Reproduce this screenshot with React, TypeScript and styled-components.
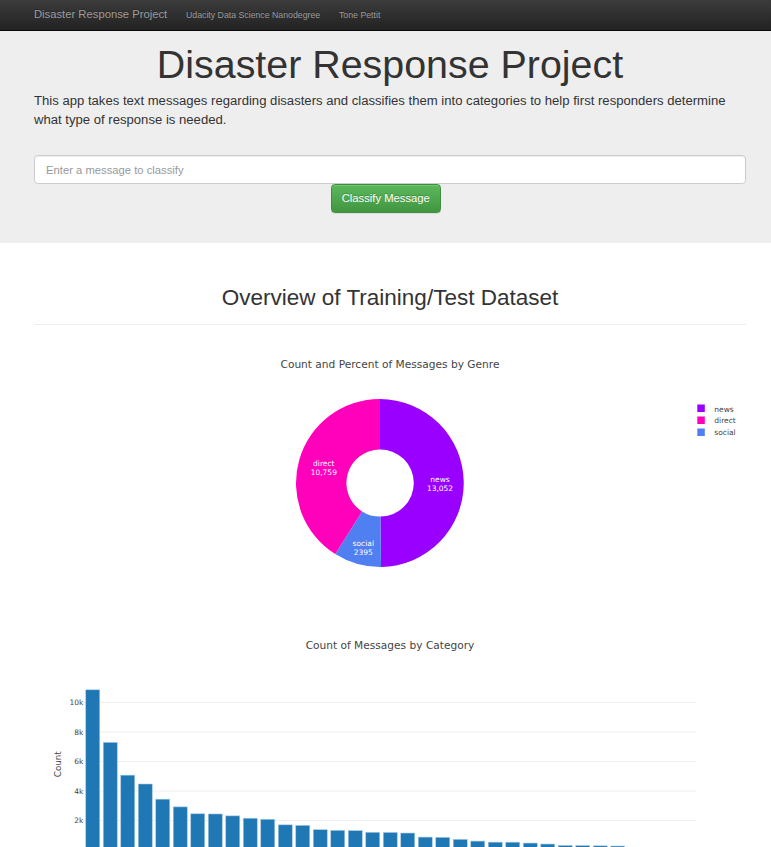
import React from "react";
import styled, { createGlobalStyle } from "styled-components";

const GlobalStyle = createGlobalStyle`
  html, body { margin: 0; padding: 0; background: #fff; }
  body {
    font-family: "Liberation Sans", Arial, Helvetica, sans-serif;
    font-size: 8.75px;
    line-height: 1.42857;
    color: #333;
  }
  * { box-sizing: border-box; }
`;

const Navbar = styled.nav`
  height: 31.25px;
  background: linear-gradient(to bottom, #3c3c3c 0%, #222 100%);
  border-bottom: 1px solid #080808;
`;

const NavInner = styled.div`
  width: 731px;
  margin-left: 24.6px;
  padding-top: 7.65px;
  display: flex;
  align-items: baseline;
`;

const Brand = styled.a`
  padding: 0 9.4px;
  font-size: 11.25px;
  line-height: 12.5px;
  color: #9d9d9d;
  text-decoration: none;
  text-shadow: 0 -1px 0 rgba(0, 0, 0, 0.25);
`;

const NavLink = styled.a`
  padding: 0 9.4px;
  font-size: 8.75px;
  line-height: 12.5px;
  color: #9d9d9d;
  text-decoration: none;
  text-shadow: 0 -1px 0 rgba(0, 0, 0, 0.25);
`;

const Jumbotron = styled.header`
  background: #eee;
  padding: 11.25px 0 30px;
`;

const Container = styled.div`
  width: 712px;
  margin-left: 34px;
`;

const HeroTitle = styled.h1`
  margin: 0 0 6.25px;
  font-size: 39.4px;
  line-height: 43.3px;
  font-weight: 400;
  text-align: center;
  color: #333;
`;

const Lead = styled.p`
  margin: 0;
  font-size: 13.125px;
  line-height: 18.75px;
  font-weight: 400;
`;

const Form = styled.form`
  margin-top: 25.7px;
  display: flex;
  flex-direction: column;
`;

const MessageInput = styled.input`
  display: block;
  width: 100%;
  height: 28.75px;
  padding: 0 10px 0 11px;
  font-family: inherit;
  font-size: 11.25px;
  color: #555;
  background: #fff;
  border: 1px solid #ccc;
  border-radius: 3.75px;
  box-shadow: inset 0 1px 1px rgba(0, 0, 0, 0.075);
  outline: none;
  &::placeholder { color: #999; }
`;

const ButtonRow = styled.div`
  padding-left: 41.6667%;
`;

const SuccessButton = styled.button`
  height: 28.75px;
  padding: 0 10px;
  font-family: inherit;
  font-size: 11.25px;
  color: #fff;
  background: linear-gradient(to bottom, #5cb85c 0%, #419641 100%);
  border: 1px solid #3e8f3e;
  border-radius: 3.75px;
  text-shadow: 0 -1px 0 rgba(0, 0, 0, 0.2);
  box-shadow: inset 0 1px 0 rgba(255, 255, 255, 0.15), 0 1px 1px rgba(0, 0, 0, 0.075);
  cursor: pointer;
`;

const PageHeader = styled.div`
  margin-top: 43px;
  padding-bottom: 13.25px;
  border-bottom: 1px solid #eee;
`;

const SectionTitle = styled.h1`
  margin: 0;
  font-size: 22.5px;
  line-height: 24.75px;
  font-weight: 400;
  text-align: center;
  color: #333;
`;

const Figure = styled.section<{ $top: number }>`
  margin-top: ${(p) => p.$top}px;
  display: flex;
  flex-direction: column;
`;

const ChartTitle = styled.div`
  font-family: "DejaVu Sans", Verdana, sans-serif;
  font-size: 10.625px;
  line-height: 13px;
  color: #444;
  text-align: center;
`;

const ChartSvg = styled.svg`
  display: block;
  font-family: "DejaVu Sans", Verdana, sans-serif;
  overflow: visible;
`;

type Slice = { label: string; value: number; color: string; text: string; lx: number; ly: number };

const SLICES: Slice[] = [
  { label: "news", value: 13052, color: "#9900ff", text: "13,052", lx: 406, ly: 110.7 },
  { label: "social", value: 2395, color: "#4f7ff0", text: "2395", lx: 329.3, ly: 174.7 },
  { label: "direct", value: 10759, color: "#ff00bb", text: "10,759", lx: 289.8, ly: 95 },
];

const LEGEND = ["news", "direct", "social"];

const CX = 346;
const CY = 112;
const R_OUT = 84;
const R_IN = 33.6;

function pt(r: number, deg: number) {
  const a = (deg * Math.PI) / 180;
  return `${(CX + r * Math.sin(a)).toFixed(2)},${(CY - r * Math.cos(a)).toFixed(2)}`;
}

function slicePath(a0: number, a1: number) {
  const large = a1 - a0 > 180 ? 1 : 0;
  return [
    `M${pt(R_OUT, a0)}`,
    `A${R_OUT},${R_OUT} 0 ${large} 1 ${pt(R_OUT, a1)}`,
    `L${pt(R_IN, a1)}`,
    `A${R_IN},${R_IN} 0 ${large} 0 ${pt(R_IN, a0)}`,
    "Z",
  ].join(" ");
}

function GenrePie() {
  const total = SLICES.reduce((s, d) => s + d.value, 0);
  let acc = 0;
  const paths = SLICES.map((d) => {
    const a0 = (acc / total) * 360;
    acc += d.value;
    const a1 = (acc / total) * 360;
    return <path key={d.label} d={slicePath(a0, a1)} fill={d.color} />;
  });
  const colorOf = (l: string) => SLICES.find((s) => s.label === l)!.color;
  return (
    <ChartSvg width={712} height={247} viewBox="0 0 712 247">
      {paths}
      {SLICES.map((d) => (
        <text key={d.label} x={d.lx} y={d.ly} fill="#fff" fontSize={7.5} textAnchor="middle">
          <tspan x={d.lx}>{d.label}</tspan>
          <tspan x={d.lx} dy={9}>{d.text}</tspan>
        </text>
      ))}
      {LEGEND.map((l, i) => (
        <g key={l}>
          <rect x={663.3} y={33.5 + i * 12} width={7.5} height={7.5} fill={colorOf(l)} />
          <text x={680.3} y={40.5 + i * 11.8} fill="#444" fontSize={7.5}>{l}</text>
        </g>
      ))}
    </ChartSvg>
  );
}

const CATEGORIES: [string, number][] = [
  ["aid_related", 10860], ["weather_related", 7297], ["direct_report", 5075], ["request", 4474],
  ["other_aid", 3446], ["food", 2923], ["earthquake", 2455], ["storm", 2443], ["shelter", 2314],
  ["floods", 2155], ["medical_help", 2084], ["infrastructure_related", 1705], ["water", 1672],
  ["other_weather", 1376], ["buildings", 1333], ["medical_products", 1313], ["transport", 1201],
  ["death", 1194], ["other_infrastructure", 1151], ["refugees", 875], ["military", 860],
  ["search_and_rescue", 724], ["money", 604], ["electricity", 532], ["cold", 530], ["security", 471],
  ["clothing", 405], ["aid_centers", 309], ["missing_people", 298], ["hospitals", 283], ["fire", 270],
  ["tools", 159], ["shops", 120], ["offer", 118], ["child_alone", 0],
];

const PX0 = 50;
const PITCH = 17.5;
const BW = 14;
const Y0 = 198;
const K = 29.5 / 2000;
const PLOT_W = PITCH * CATEGORIES.length;

function CategoryBars() {
  const ticks = [0, 2000, 4000, 6000, 8000, 10000];
  return (
    <ChartSvg width={712} height={320} viewBox="0 0 712 320">
      {ticks.slice(1).map((t) => (
        <line key={t} x1={PX0} x2={PX0 + PLOT_W} y1={Y0 - t * K} y2={Y0 - t * K} stroke="#eee" strokeWidth={1} />
      ))}
      {ticks.map((t) => (
        <text key={t} x={49.3} y={Y0 - t * K + 2.7} fill="#444" fontSize={7.5} textAnchor="end">
          {t === 0 ? "0" : `${t / 1000}k`}
        </text>
      ))}
      <text
        x={26.7}
        y={112.2}
        fill="#444"
        fontSize={8.75}
        textAnchor="middle"
        transform="rotate(-90 26.7 112.2)"
      >
        Count
      </text>
      {CATEGORIES.map(([name, v], i) => {
        const h = v * K;
        const x = PX0 + i * PITCH + (PITCH - BW) / 2;
        return (
          <rect
            key={name}
            x={x}
            y={Y0 - h}
            width={BW}
            height={h}
            fill="#1f77b4"
            stroke="#a7cbe4"
            strokeWidth={0.6}
          />
        );
      })}
      {CATEGORIES.map(([name], i) => {
        const cx = PX0 + i * PITCH + PITCH / 2 + 2.7;
        const ty = Y0 + 18;
        return (
          <text
            key={name}
            x={cx}
            y={ty}
            fill="#444"
            fontSize={7.5}
            textAnchor="end"
            transform={`rotate(-90 ${cx} ${ty})`}
          >
            {name}
          </text>
        );
      })}
    </ChartSvg>
  );
}

export default function App() {
  return (
    <>
      <GlobalStyle />
      <Navbar>
        <NavInner>
          <Brand href="#">Disaster Response Project</Brand>
          <NavLink href="#">Udacity Data Science Nanodegree</NavLink>
          <NavLink href="#">Tone Pettit</NavLink>
        </NavInner>
      </Navbar>
      <Jumbotron>
        <Container>
          <HeroTitle>Disaster Response Project</HeroTitle>
          <Lead>
            This app takes text messages regarding disasters and classifies them into categories to help first
            responders determine what type of response is needed.
          </Lead>
          <Form onSubmit={(e) => e.preventDefault()}>
            <MessageInput type="text" name="query" placeholder="Enter a message to classify" />
            <ButtonRow>
              <SuccessButton type="submit">Classify Message</SuccessButton>
            </ButtonRow>
          </Form>
        </Container>
      </Jumbotron>
      <Container>
        <PageHeader>
          <SectionTitle>Overview of Training/Test Dataset</SectionTitle>
        </PageHeader>
        <Figure $top={33.5}>
          <ChartTitle>Count and Percent of Messages by Genre</ChartTitle>
          <GenrePie />
        </Figure>
        <Figure $top={20.8}>
          <ChartTitle>Count of Messages by Category</ChartTitle>
          <CategoryBars />
        </Figure>
      </Container>
    </>
  );
}
